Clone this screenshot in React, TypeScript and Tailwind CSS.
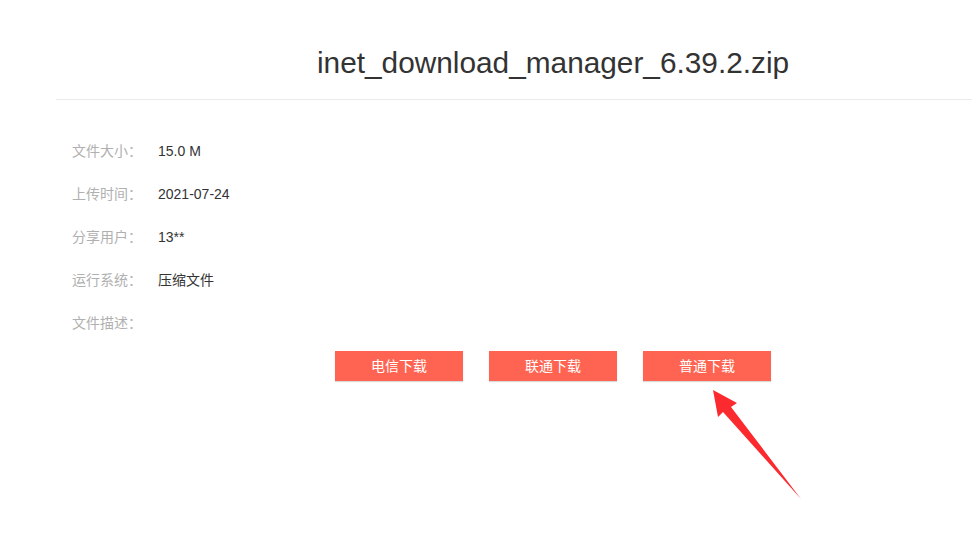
export default function App() {
  const rows = [
    ["文件大小：", "15.0 M"],
    ["上传时间：", "2021-07-24"],
    ["分享用户：", "13**"],
    ["运行系统：", "压缩文件"],
    ["文件描述：", ""],
  ];
  const buttons = ["电信下载", "联通下载", "普通下载"];

  return (
    <div
      className="relative w-[972px] h-[556px] bg-white overflow-hidden"
      style={{ fontFamily: '"Liberation Sans", Arial, "Noto Sans CJK SC", sans-serif' }}
    >
      {/* title */}
      <div className="ml-[56px] h-[100px] border-b border-[#ebebeb] pt-[40px] pl-[261px]">
        <h1 className="text-[29.8px] leading-[46px] text-[#333] whitespace-nowrap">
          inet_download_manager_6.39.2.zip
        </h1>
      </div>

      {/* info rows */}
      <div className="pl-[72px] pt-[30px]">
        {rows.map(([k, v]) => (
          <div key={k} className="flex h-[43px] items-center text-[14px]">
            <span className="w-[86px] text-[#b0b0b0]">{k}</span>
            <span className="text-[#333]">{v}</span>
          </div>
        ))}
      </div>

      {/* buttons */}
      <div className="flex gap-[26px] pl-[335px] mt-[6px]">
        {buttons.map((b) => (
          <button
            key={b}
            className="w-[128px] h-[30px] bg-[#ff6452] text-white text-[14px] shadow-[0_1px_1px_rgba(0,0,0,0.15)]"
          >
            {b}
          </button>
        ))}
      </div>

      {/* annotation arrow */}
      <svg className="absolute left-0 top-0" width="972" height="556">
        <polygon
          points="713,390 737,403 731,407 801,499 723,412 718,417"
          fill="#fb2a2f"
        />
      </svg>
    </div>
  );
}
